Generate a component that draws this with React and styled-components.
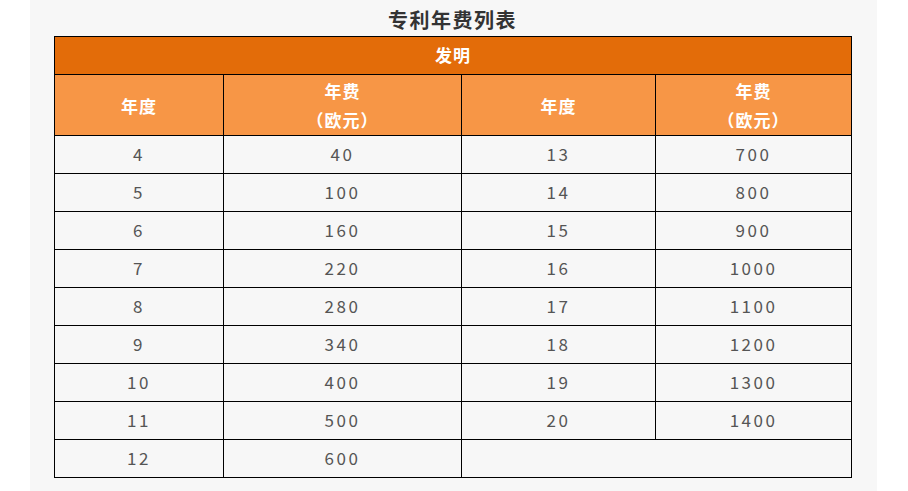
import React from "react";
import styled, { createGlobalStyle } from "styled-components";

const GlobalStyle = createGlobalStyle`
  html, body {
    margin: 0;
    padding: 0;
    background: #ffffff;
  }
  body {
    font-family: "Noto Sans CJK SC", "Noto Sans", sans-serif;
  }
`;

const Panel = styled.div`
  margin-left: 30px;
  width: 847px;
  height: 491px;
  background: #f7f7f7;
  padding-left: 24px;
  box-sizing: border-box;
`;

const Title = styled.div`
  width: 797px;
  padding-top: 5px;
  height: 31px;
  line-height: 30px;
  text-align: center;
  font-size: 20px;
  font-weight: 700;
  letter-spacing: 1.5px;
  color: #333333;
`;

const Table = styled.table`
  border-collapse: collapse;
  width: 797px;
  table-layout: fixed;
`;

const Row = styled.tr`
  height: ${(p) => p.$h || 38}px;
`;

const HeadCell = styled.td`
  border: 1px solid #000;
  padding: 0 0 ${(p) => (p.$dark ? 2 : 0)}px;
  text-align: center;
  color: #ffffff;
  font-weight: 700;
  font-size: 17px;
  letter-spacing: 1px;
  line-height: 29px;
  background: ${(p) => (p.$dark ? "#e36c09" : "#f79646")};
`;

const Cell = styled.td`
  border: 1px solid #000;
  padding: 0 0 3px;
  text-align: center;
  color: #555555;
  font-size: 17px;
  letter-spacing: 2.5px;
  background: #f7f7f7;
`;

const left = [
  ["4", "40"],
  ["5", "100"],
  ["6", "160"],
  ["7", "220"],
  ["8", "280"],
  ["9", "340"],
  ["10", "400"],
  ["11", "500"],
  ["12", "600"],
];

const right = [
  ["13", "700"],
  ["14", "800"],
  ["15", "900"],
  ["16", "1000"],
  ["17", "1100"],
  ["18", "1200"],
  ["19", "1300"],
  ["20", "1400"],
];

export default function App() {
  return (
    <>
      <GlobalStyle />
      <Panel>
        <Title>专利年费列表</Title>
        <Table>
          <colgroup>
            <col style={{ width: 169 }} />
            <col style={{ width: 238 }} />
            <col style={{ width: 194 }} />
            <col style={{ width: 196 }} />
          </colgroup>
          <tbody>
            <Row $h={38}>
              <HeadCell $dark colSpan={4}>发明</HeadCell>
            </Row>
            <Row $h={61}>
              <HeadCell>年度</HeadCell>
              <HeadCell>
                年费
                <br />
                （欧元）
              </HeadCell>
              <HeadCell>年度</HeadCell>
              <HeadCell>
                年费
                <br />
                （欧元）
              </HeadCell>
            </Row>
            {left.map(([year, fee], i) => (
              <Row key={year}>
                <Cell>{year}</Cell>
                <Cell>{fee}</Cell>
                {right[i] ? (
                  <>
                    <Cell>{right[i][0]}</Cell>
                    <Cell>{right[i][1]}</Cell>
                  </>
                ) : (
                  <Cell colSpan={2} />
                )}
              </Row>
            ))}
          </tbody>
        </Table>
      </Panel>
    </>
  );
}
